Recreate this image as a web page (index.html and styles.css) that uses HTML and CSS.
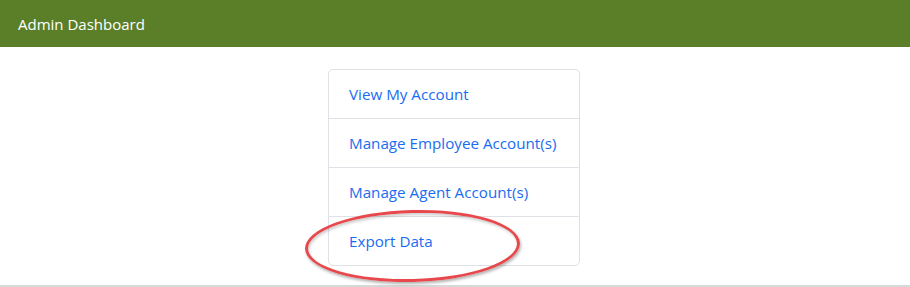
FILE: index.html
```html
<!DOCTYPE html>
<html lang="en">
<head>
    <meta charset="UTF-8">
    <meta name="viewport" content="width=device-width, initial-scale=1.0">
    <title>Admin Dashboard</title>
    <link rel="stylesheet" href="styles.css">
</head>
<body>
    <header class="topbar">
        <span class="brand">Admin Dashboard</span>
    </header>

    <main class="content">
        <div class="menu-wrap">
            <ul class="menu">
                <li class="menu-item"><a href="#">View My Account</a></li>
                <li class="menu-item"><a href="#">Manage Employee Account(s)</a></li>
                <li class="menu-item"><a href="#">Manage Agent Account(s)</a></li>
                <li class="menu-item"><a href="#">Export Data</a></li>
            </ul>
            <!-- annotation circling the export link -->
            <div class="mark"></div>
        </div>
    </main>

    <div class="page-end"></div>
</body>
</html>
```

FILE: styles.css
```css
body {
    margin: 0;
    font-family: "Open Sans", "Noto Sans", sans-serif;
    background-color: #fff;
}
.topbar {
    height: 47px;
    background-color: #5b7f29;
    display: flex;
    align-items: center;
    padding-left: 18px;
}
.brand {
    color: #fff;
    font-size: 15px;
}
.content {
    padding-top: 22px;
}
.menu-wrap {
    position: relative;
    width: 252px;
    margin: 0 auto;
    left: -1px;
}
.menu {
    list-style: none;
    margin: 0;
    padding: 0;
    border: 1px solid #dee2e6;
    border-radius: 5px;
}
.menu-item {
    padding: 12px 20px;
    line-height: 24px;
    font-size: 15.2px;
    border-top: 1px solid #dee2e6;
}
.menu-item:first-child {
    border-top: none;
}
.menu-item a {
    color: #1a6cf0;
    text-decoration: none;
}
.mark {
    position: absolute;
    left: -23px;
    top: 141px;
    width: 215px;
    height: 72px;
    box-sizing: border-box;
    border: 3.5px solid #e8474b;
    border-radius: 50%;
    transform: rotate(-1.5deg);
    box-shadow: 1px 2px 3px rgba(0,0,0,0.3), inset 1px 2px 3px rgba(0,0,0,0.2);
}
.page-end {
    margin-top: 19px;
    height: 2px;
    background-color: #d8d8d8;
}
```
